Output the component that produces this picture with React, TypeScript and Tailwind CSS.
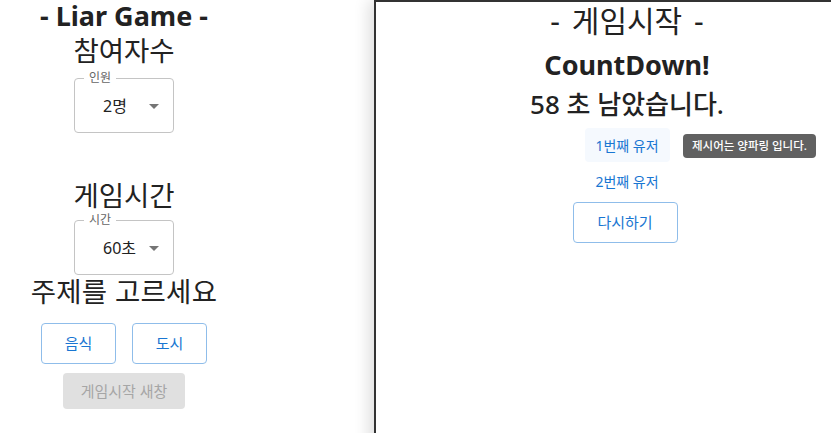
import React from 'react';

const font = { fontFamily: '"Noto Sans", "Noto Sans CJK KR", sans-serif' };

function OutlinedSelect({ label, value }: { label: string; value: string }) {
  return (
    <div className="relative mx-auto w-[100px] h-[55px] rounded border border-[#c4c4c4]">
      <span className="absolute left-[9px] -top-[9px] bg-white px-[5px] text-[12px] leading-[16px] text-[#666]">
        {label}
      </span>
      <div className="flex h-full items-center pl-[28px] pr-[14px]">
        <span className="flex-1 text-left text-[16px] text-[#222]">{value}</span>
        <svg width="10" height="5" viewBox="0 0 10 5" className="mt-[1px]">
          <path d="M0 0 L10 0 L5 5 Z" fill="#757575" />
        </svg>
      </div>
    </div>
  );
}

export default function App() {
  return (
    <div className="relative h-[433px] w-[831px] overflow-hidden bg-white" style={font}>
      {/* Main page */}
      <div className="w-[248px] text-center text-[#222]">
        <h2 className="text-[27px] font-bold leading-[32px]">- Liar Game -</h2>
        <h3 className="mt-[2px] text-[27.5px] leading-[34px]">참여자수</h3>
        <div className="mt-[10px]">
          <OutlinedSelect label="인원" value="2명" />
        </div>
        <h3 className="mt-[47px] text-[27.5px] leading-[32px]">게임시간</h3>
        <div className="mt-[8px]">
          <OutlinedSelect label="시간" value="60초" />
        </div>
        <h3 className="text-[27.5px] leading-[34px] tracking-[0.3px]">주제를 고르세요</h3>
        <div className="mt-[14px] flex justify-center gap-[16px]">
          <button className="h-[41px] w-[75px] rounded border border-[#8fbdea] text-[15px] text-[#1976d2]">음식</button>
          <button className="h-[41px] w-[75px] rounded border border-[#8fbdea] text-[15px] text-[#1976d2]">도시</button>
        </div>
        <button className="mt-[9px] h-[36px] w-[122px] rounded bg-[#e0e0e0] text-[15px] text-[#a6a6a6]">
          게임시작 새창
        </button>
      </div>

      {/* Popup window */}
      <div className="absolute left-[374px] top-0 h-[460px] w-[504px] border-l-[2px] border-t-[2px] border-[#333] bg-white shadow-[-6px_0_14px_rgba(0,0,0,0.12)]">
        <div className="text-center text-[#222]">
          <h2 className="text-[30px] leading-[38px] [word-spacing:4px]">- 게임시작 -</h2>
          <h2 className="mt-[8px] text-[27px] font-bold leading-[34px]">CountDown!</h2>
          <h3 className="mt-[5px] text-[26px] font-medium leading-[34px]">58 초 남았습니다.</h3>
          <div className="relative mt-[7px] flex flex-col items-center">
            <button className="h-[34px] w-[85px] rounded bg-[#f5f9fe] text-[14px] text-[#1976d2]">1번째 유저</button>
            <button className="mt-[4px] h-[30px] w-[85px] rounded text-[14px] text-[#1976d2]">2번째 유저</button>
            <button className="mt-[6px] mr-[4px] h-[41px] w-[105px] rounded border border-[#8fbdea] text-[15px] text-[#1976d2]">다시하기</button>
            <div className="absolute left-[307px] top-[6px] rounded bg-[#616161] px-[9px] py-[4px] text-[11.5px] font-medium leading-[16px] text-white">
              제시어는 양파링 입니다.
            </div>
          </div>
        </div>
      </div>
    </div>
  );
}
